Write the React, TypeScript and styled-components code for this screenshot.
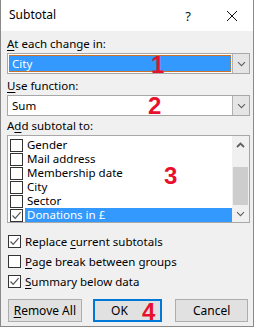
import React from "react";
import styled, { createGlobalStyle } from "styled-components";

const Global = createGlobalStyle`
  html, body { margin: 0; padding: 0; background: #ffffff; }
  body { font-family: "Noto Sans", "Open Sans", sans-serif; font-size: 11.5px; color: #000; }
  * { box-sizing: border-box; }
`;

const Dialog = styled.div`
  position: relative;
  width: 254px;
  height: 327px;
  display: flex;
  flex-direction: column;
  border: 1px solid #8a8a8a;
  border-top: none;
  background: #f0f0f0;
`;

const TitleBar = styled.div`
  height: 31px;
  background: #ffffff;
  display: flex;
  align-items: center;
  padding-left: 8px;
  font-size: 12px;
`;

const Title = styled.span`
  flex: 1;
  margin-top: -2px;
`;

const TitleButton = styled.span<{ $w: number }>`
  width: ${(p) => p.$w}px;
  display: flex;
  align-items: center;
  justify-content: center;
  font-size: 13px;
  color: #111;
`;

const Body = styled.div`
  flex: 1;
  display: flex;
  flex-direction: column;
  padding: 5px 5px 0 6px;
`;

const Label = styled.div<{ $mt?: number }>`
  line-height: 15px;
  margin-top: ${(p) => p.$mt ?? 0}px;
  margin-bottom: 2px;
`;

const U = styled.span`
  text-decoration: underline;
  text-underline-offset: 2px;
`;

const Combo = styled.div`
  height: 21px;
  display: flex;
  border: 1px solid #a8a8a8;
  background: #ffffff;
  width: 243px;
`;

const ComboValue = styled.div<{ $selected?: boolean }>`
  flex: 1;
  margin: 1px;
  display: flex;
  align-items: center;
  padding-left: 3px;
  background: ${(p) => (p.$selected ? "#3399ff" : "#ffffff")};
  color: ${(p) => (p.$selected ? "#ffffff" : "#000")};
  outline: ${(p) => (p.$selected ? "1px dotted #c8702a" : "none")};
  outline-offset: -1px;
`;

const DropButton = styled.div`
  width: 17px;
  background: #e5e5e5;
  border-left: 1px solid #b0b0b0;
  display: flex;
  align-items: center;
  justify-content: center;
`;

const ListBox = styled.div`
  width: 243px;
  height: 88px;
  border: 1px solid #a8a8a8;
  background: #ffffff;
  display: flex;
`;

const ListItems = styled.div`
  flex: 1;
  display: flex;
  flex-direction: column;
  padding-top: 2px;
`;

const ListRow = styled.div`
  height: 14px;
  display: flex;
  align-items: center;
`;

const ListText = styled.span<{ $selected?: boolean }>`
  flex: 1;
  height: 14px;
  line-height: 14px;
  padding-left: 2px;
  margin-left: 2px;
  background: ${(p) => (p.$selected ? "#3399ff" : "transparent")};
  color: ${(p) => (p.$selected ? "#ffffff" : "#000")};
`;

const ScrollBar = styled.div`
  width: 17px;
  background: #f0f0f0;
  display: flex;
  flex-direction: column;
  align-items: center;
`;

const ScrollArrow = styled.div`
  height: 17px;
  width: 17px;
  display: flex;
  align-items: center;
  justify-content: center;
`;

const ScrollTrack = styled.div`
  flex: 1;
  width: 100%;
  display: flex;
  flex-direction: column;
  align-items: center;
`;

const Thumb = styled.div`
  margin-top: 14px;
  width: 15px;
  height: 38px;
  background: #cdcdcd;
`;

const Box = styled.span<{ $ml?: number }>`
  width: 13px;
  height: 13px;
  margin-left: ${(p) => p.$ml ?? 0}px;
  border: 1px solid #333333;
  background: #ffffff;
  display: inline-flex;
  align-items: center;
  justify-content: center;
  flex-shrink: 0;
`;

const Options = styled.div`
  margin-top: 12px;
  display: flex;
  flex-direction: column;
  gap: 7px;
`;

const OptionRow = styled.div`
  height: 13px;
  display: flex;
  align-items: center;
  gap: 4px;
  padding-left: 1px;
`;

const Buttons = styled.div`
  margin-top: 11px;
  display: flex;
  padding-left: 1px;
`;

const Button = styled.div<{ $w: number; $ml: number; $default?: boolean }>`
  width: ${(p) => p.$w}px;
  margin-left: ${(p) => p.$ml}px;
  height: 23px;
  background: #e1e1e1;
  border: ${(p) => (p.$default ? "2px solid #0078d7" : "1px solid #adadad")};
  display: flex;
  align-items: center;
  justify-content: center;
  font-size: 12px;
`;

const OkText = styled.span`
  margin-right: 16px;
`;

const Marker = styled.span<{ $x: number; $y: number }>`
  position: absolute;
  left: ${(p) => p.$x}px;
  top: ${(p) => p.$y}px;
  font-family: "Liberation Sans", Arial, sans-serif;
  font-weight: bold;
  font-size: 24px;
  line-height: 24px;
  color: #e8112d;
`;

const Check = () => (
  <svg width="11" height="11" viewBox="0 0 11 11">
    <path d="M1.5 5.5 L4.2 8.3 L9.6 2.2" fill="none" stroke="#555" strokeWidth="1.2" />
  </svg>
);

const Chevron = ({ up }: { up?: boolean }) => (
  <svg width="9" height="6" viewBox="0 0 9 6">
    <path
      d={up ? "M1 5 L4.5 1.5 L8 5" : "M1 1.2 L4.5 4.7 L8 1.2"}
      fill="none"
      stroke="#606060"
      strokeWidth={up ? 1.8 : 1.1}
    />
  </svg>
);

const CloseIcon = () => (
  <svg width="12" height="12" viewBox="0 0 12 12">
    <path d="M1 1 L11 11 M11 1 L1 11" stroke="#111" strokeWidth="1" />
  </svg>
);

const items = ["Gender", "Mail address", "Membership date", "City", "Sector", "Donations in £"];

export default function App() {
  return (
    <>
      <Global />
      <Dialog>
        <TitleBar>
          <Title>Subtotal</Title>
          <TitleButton $w={22}>?</TitleButton>
          <TitleButton $w={22} />
          <TitleButton $w={22}>
            <CloseIcon />
          </TitleButton>
          <TitleButton $w={10} />
        </TitleBar>
        <Body>
          <Label>
            <U>A</U>t each change in:
          </Label>
          <Combo>
            <ComboValue $selected>City</ComboValue>
            <DropButton>
              <Chevron />
            </DropButton>
          </Combo>
          <Label $mt={4}>
            <U>U</U>se function:
          </Label>
          <Combo>
            <ComboValue>Sum</ComboValue>
            <DropButton>
              <Chevron />
            </DropButton>
          </Combo>
          <Label $mt={2}>
            A<U>d</U>d subtotal to:
          </Label>
          <ListBox>
            <ListItems>
              {items.map((it, i) => (
                <ListRow key={it}>
                  <Box $ml={2}>{i === 5 ? <Check /> : null}</Box>
                  <ListText $selected={i === 5}>{it}</ListText>
                </ListRow>
              ))}
            </ListItems>
            <ScrollBar>
              <ScrollArrow>
                <Chevron up />
              </ScrollArrow>
              <ScrollTrack>
                <Thumb />
              </ScrollTrack>
              <ScrollArrow>
                <Chevron />
              </ScrollArrow>
            </ScrollBar>
          </ListBox>
          <Options>
            <OptionRow>
              <Box>
                <Check />
              </Box>
              <span>
                Replace <U>c</U>urrent subtotals
              </span>
            </OptionRow>
            <OptionRow>
              <Box />
              <span>
                <U>P</U>age break between groups
              </span>
            </OptionRow>
            <OptionRow>
              <Box>
                <Check />
              </Box>
              <span>
                <U>S</U>ummary below data
              </span>
            </OptionRow>
          </Options>
          <Buttons>
            <Button $w={74} $ml={0}>
              <span>
                <U>R</U>emove All
              </span>
            </Button>
            <Button $w={70} $ml={11} $default>
              <OkText>OK</OkText>
            </Button>
            <Button $w={73} $ml={13}>
              Cancel
            </Button>
          </Buttons>
        </Body>
        <Marker $x={150} $y={53}>1</Marker>
        <Marker $x={147} $y={94}>2</Marker>
        <Marker $x={163} $y={164}>3</Marker>
        <Marker $x={141} $y={300}>4</Marker>
      </Dialog>
    </>
  );
}
